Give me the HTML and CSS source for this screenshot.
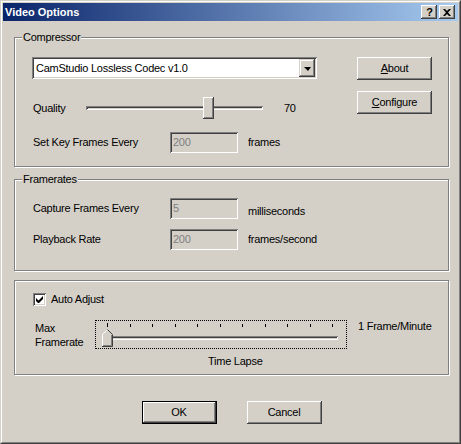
FILE: index.html
```html
<!DOCTYPE html>
<html>
<head>
<meta charset="utf-8">
<title>Video Options</title>
<link rel="stylesheet" href="styles.css">
</head>
<body>
<div class="window">
  <div class="window-inner">
    <div class="titlebar">
      <span class="title">Video Options</span>
      <div class="caption-btns">
        <div class="cap help">?</div>
        <div class="cap close">
          <svg width="8" height="7" viewBox="0 0 8 7"><path d="M0 0h2l2 2 2-2h2L5 3.5 8 7H6L4 5 2 7H0l3-3.5z" fill="#000"/></svg>
        </div>
      </div>
    </div>

    <div class="content">
      <div class="group g1">
        <div class="legend">Compressor</div>
        <div class="g1-body">
          <div class="g1-left">
            <div class="combo">
              <span class="combo-text">CamStudio Lossless Codec v1.0</span>
              <div class="combo-btn"><span class="arrow"></span></div>
            </div>
            <div class="row quality-row">
              <span class="q-label">Quality</span>
              <div class="hslider">
                <div class="groove"></div>
                <div class="box-thumb" style="left: calc(70% - 7px)"></div>
              </div>
              <span class="q-value">70</span>
            </div>
            <div class="row field-row">
              <span class="field-label">Set Key Frames Every</span>
              <div class="edit">200</div>
              <span class="unit">frames</span>
            </div>
          </div>
          <div class="g1-right">
            <div class="btn"><span><u>A</u>bout</span></div>
            <div class="btn"><span><u>C</u>onfigure</span></div>
          </div>
        </div>
      </div>

      <div class="group g2">
        <div class="legend">Framerates</div>
        <div class="g2-body">
          <div class="row field-row">
            <span class="field-label">Capture Frames Every</span>
            <div class="edit">5</div>
            <span class="unit low">milliseconds</span>
          </div>
          <div class="row field-row">
            <span class="field-label">Playback Rate</span>
            <div class="edit">200</div>
            <span class="unit">frames/second</span>
          </div>
        </div>
      </div>

      <div class="group g3">
        <div class="g3-body">
          <div class="check-row">
            <div class="checkbox">
              <svg width="7" height="7" viewBox="0 0 7 7"><path d="M0 2v3l2 2h1l4-4V0L2.5 4.5z" fill="#000"/></svg>
            </div>
            <span>Auto Adjust</span>
          </div>
          <div class="lapse-row">
            <div class="lapse-label">Max<br>Framerate</div>
            <div class="tslider">
              <div class="ticks">
                <i class="first"></i><i></i><i></i><i></i><i></i><i></i><i></i><i></i><i></i><i></i><i></i>
              </div>
              <div class="tgroove"></div>
              <svg class="arrow-thumb" width="11" height="18" viewBox="0 0 11 18">
                <path d="M0 18V5.5L5.5 0 11 5.5V18z" fill="#D4D0C8"/>
                <path d="M0.5 17.5V5.5L5.5 0.5" fill="none" stroke="#fff"/>
                <path d="M5.5 0.5L10.5 5.5V17.5H0" fill="none" stroke="#404040"/>
                <path d="M9.5 6V16.5H1" fill="none" stroke="#808080"/>
              </svg>
            </div>
            <div class="lapse-max">1 Frame/Minute</div>
          </div>
          <div class="lapse-caption">Time Lapse</div>
        </div>
      </div>

      <div class="buttons">
        <div class="btn default"><span>OK</span></div>
        <div class="btn"><span>Cancel</span></div>
      </div>
    </div>
  </div>
</div>
</body>
</html>
```

FILE: styles.css
```css
* { box-sizing: border-box; }
html, body { margin: 0; padding: 0; }
body {
  width: 461px;
  height: 444px;
  overflow: hidden;
  background: #D4D0C8;
  font-family: "Liberation Sans", Arial, sans-serif;
  font-size: 11px;
  letter-spacing: -0.25px;
  line-height: 13px;
  color: #000;
}
.window {
  width: 461px;
  height: 444px;
  border: 1px solid;
  border-color: #D4D0C8 #404040 #404040 #D4D0C8;
  background: #D4D0C8;
}
.window-inner {
  height: 100%;
  border: 1px solid;
  border-color: #fff #808080 #808080 #fff;
  padding: 1px;
  display: flex;
  flex-direction: column;
}
.titlebar {
  height: 18px;
  flex: none;
  background: linear-gradient(to right, #0A246A, #A6CAF0);
  display: flex;
  align-items: center;
  padding: 0 3px 0 2px;
}
.title {
  flex: 1;
  color: #fff;
  font-weight: bold;
  font-size: 11px;
  letter-spacing: 0;
}
.caption-btns { display: flex; gap: 2px; }
.cap {
  width: 16px;
  height: 14px;
  background: #D4D0C8;
  box-shadow: inset -1px -1px #404040, inset 1px 1px #fff, inset -2px -2px #808080;
  display: flex;
  align-items: center;
  justify-content: center;
}
.help {
  font-weight: bold;
  font-size: 11px;
  line-height: 14px;
  padding-left: 1px;
  letter-spacing: 0;
}
.close svg { display: block; }

.content {
  flex: 1;
  padding: 16px 9px 0 11px;
  display: flex;
  flex-direction: column;
}
.group {
  border: 1px solid #808080;
  box-shadow: inset 1px 1px #fff, 1px 1px #fff;
}
.legend {
  margin: -7px 0 0 7px;
  padding: 0 1px;
  width: max-content;
  background: #D4D0C8;
  line-height: 13px;
}

/* group 1 */
.g1-body {
  padding: 13px 16px 13px 17px;
  display: flex;
  justify-content: space-between;
}
.g1-left { display: flex; flex-direction: column; }
.g1-right { display: flex; flex-direction: column; gap: 11px; }
.combo {
  width: 285px;
  height: 22px;
  background: #fff;
  box-shadow: inset 1px 1px #808080, inset -1px -1px #fff, inset 2px 2px #404040, inset -2px -2px #D4D0C8;
  display: flex;
  align-items: center;
  padding: 2px;
}
.combo-text { flex: 1; padding-left: 2px; }
.combo-btn {
  width: 16px;
  height: 18px;
  background: #D4D0C8;
  box-shadow: inset -1px -1px #404040, inset 1px 1px #D4D0C8, inset -2px -2px #808080, inset 2px 2px #fff;
  display: flex;
  align-items: center;
  justify-content: center;
}
.arrow {
  width: 0;
  height: 0;
  border-left: 4px solid transparent;
  border-right: 3px solid transparent;
  border-top: 4px solid #000;
  margin-top: 1px;
}
.row { display: flex; align-items: center; }
.quality-row { height: 22px; margin-top: 18px; }
.q-label { width: 54px; padding-left: 1px; }
.hslider {
  position: relative;
  width: 177px;
  height: 22px;
  display: flex;
  align-items: center;
}
.groove {
  width: 100%;
  height: 4px;
  box-shadow: inset 1px 1px #808080, inset -1px -1px #fff, inset 2px 2px #404040, inset -2px -2px #D4D0C8;
}
.box-thumb {
  position: absolute;
  top: 0;
  width: 11px;
  height: 22px;
  background: #D4D0C8;
  box-shadow: inset -1px -1px #404040, inset 1px 1px #fff, inset -2px -2px #808080;
}
.q-value { margin-left: 21px; }

.field-row { height: 21px; }
.g1-left .field-row { margin-top: 13px; }
.field-label { width: 138px; padding-left: 1px; flex: none; }
.edit {
  width: 68px;
  height: 21px;
  padding: 4px 3px 0;
  color: #808080;
  background: #D4D0C8;
  box-shadow: inset 1px 1px #808080, inset -1px -1px #fff, inset 2px 2px #404040, inset -2px -2px #D4D0C8;
}
.unit { margin-left: 10px; }
.unit.low { padding-top: 5px; }

.btn {
  width: 75px;
  height: 23px;
  background: #D4D0C8;
  box-shadow: inset -1px -1px #404040, inset 1px 1px #fff, inset -2px -2px #808080;
  display: flex;
  align-items: center;
  justify-content: center;
}
.btn.default {
  box-shadow: inset 0 0 0 1px #000, inset -2px -2px #404040, inset 2px 2px #fff, inset -3px -3px #808080;
}

/* group 2 */
.g2 { margin-top: 12px; }
.g2-body {
  padding: 12px 16px 20px 17px;
  display: flex;
  flex-direction: column;
  gap: 10px;
}

/* group 3 */
.g3 { margin-top: 9px; }
.g3-body {
  padding: 12px 16px 6px 17px;
}
.check-row { display: flex; align-items: center; height: 13px; margin-left: 1px; }
.checkbox {
  width: 13px;
  height: 13px;
  margin-right: 5px;
  background: #fff;
  box-shadow: inset 1px 1px #808080, inset -1px -1px #fff, inset 2px 2px #404040, inset -2px -2px #D4D0C8;
  display: flex;
  align-items: center;
  justify-content: center;
}
.checkbox svg { display: block; }
.lapse-row {
  display: flex;
  align-items: flex-start;
  margin-top: 14px;
}
.lapse-label {
  width: 63px;
  flex: none;
  padding-left: 3px;
  line-height: 14px;
  margin-top: 1px;
}
.tslider {
  position: relative;
  flex: none;
  width: 252px;
  height: 29px;
  border: 1px dotted #000;
}
.ticks {
  display: flex;
  justify-content: space-between;
  width: 226px;
  margin: 2px 0 0 11px;
  height: 4px;
}
.ticks i {
  display: block;
  width: 1px;
  height: 3px;
  margin-top: 1px;
  background: #000;
}
.ticks i.first { height: 4px; margin-top: 0; }
.tgroove {
  margin: 9px 0 0 14px;
  width: 228px;
  height: 4px;
  box-shadow: inset 1px 1px #808080, inset -1px -1px #fff, inset 2px 2px #404040, inset -2px -2px #D4D0C8;
}
.arrow-thumb {
  position: absolute;
  left: 6px;
  top: 8px;
}
.lapse-max { margin-left: 11px; white-space: nowrap; flex: none; }
.lapse-caption {
  margin-top: 6px;
  padding-left: 176px;
}

.buttons {
  display: flex;
  justify-content: center;
  gap: 30px;
  margin-top: 26px;
}
```
